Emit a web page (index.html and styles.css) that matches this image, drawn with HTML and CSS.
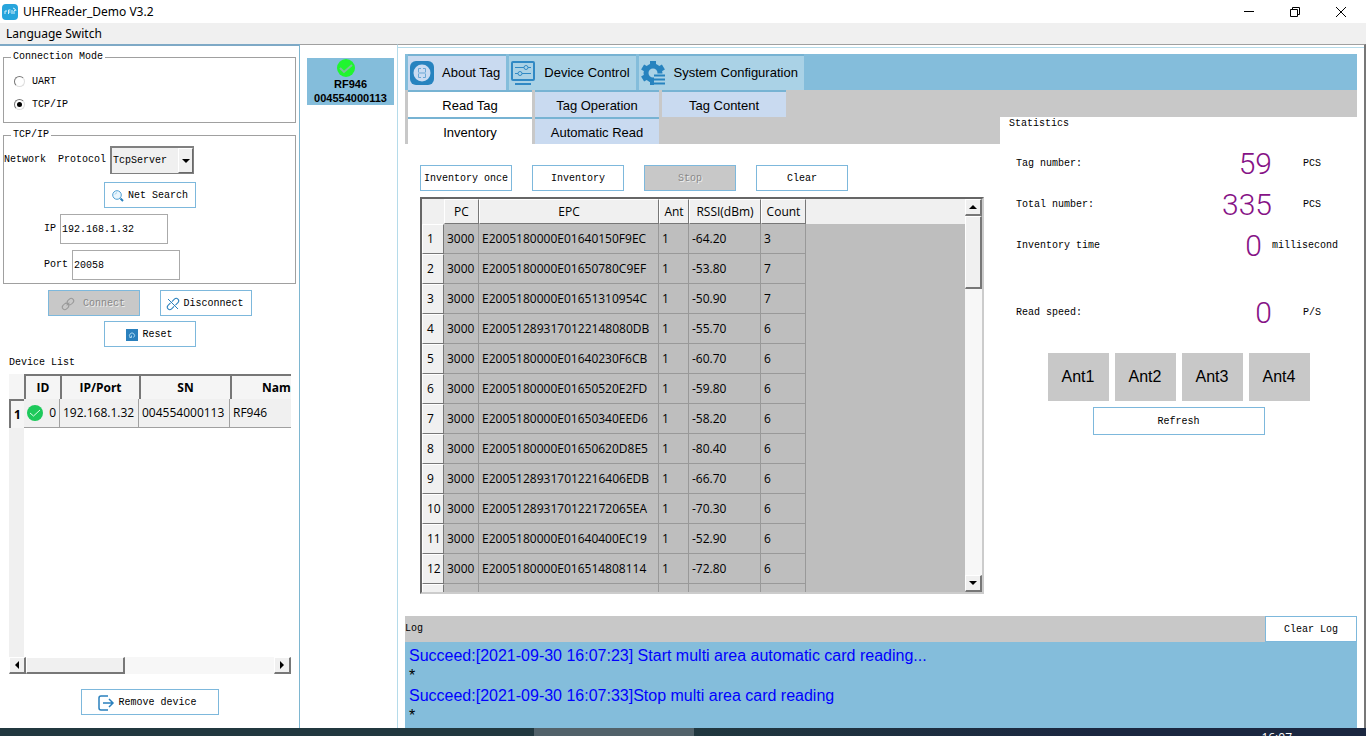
FILE: index.html
```html
<!DOCTYPE html>
<html lang="en">
<head>
  <meta charset="UTF-8">
  <title>UHFReader_Demo V3.2</title>
  <link rel="stylesheet" href="styles.css">
</head>
<body>
  <header class="titlebar">
    <svg class="app-icon" viewBox="0 0 16 16">
      <rect width="16" height="16" rx="4" fill="#27a5dc"/>
      <path d="M3 10V7h2M6.500 10V6h2M6.500 8h2M10 6v4M12 10V7l1-1M11 4l2 1 1 2" fill="none" stroke="#d8f1fb"/>
    </svg>
    <h1>UHFReader_Demo V3.2</h1>
    <div class="window-buttons">
      <button type="button" aria-label="Minimize"><svg viewBox="0 0 12 12"><path d="M1 5.500h10"/></svg></button>
      <button type="button" aria-label="Restore"><svg viewBox="0 0 12 12"><path d="M1.500 3.500h7v7h-7zM3.500 3V1.500h7v7H9"/></svg></button>
      <button type="button" aria-label="Close"><svg viewBox="0 0 12 12"><path d="M1 1l10 10M11 1L1 11"/></svg></button>
    </div>
  </header>
  <nav class="menubar"><a href="#">Language Switch</a></nav>

  <div class="workspace">
    <aside class="sidebar">
      <fieldset class="mode">
        <legend>Connection Mode</legend>
        <label><input type="radio" name="mode">UART</label>
        <label><input type="radio" name="mode" checked>TCP/IP</label>
      </fieldset>

      <fieldset class="network">
        <legend>TCP/IP</legend>
        <div class="protocol">
          <label for="protocol">Network&nbsp; Protocol</label>
          <span class="select">
            <select id="protocol"><option>TcpServer</option></select>
            <span class="select-arrow"><svg viewBox="0 0 8 4"><path d="M0 0h8L4 4z"/></svg></span>
          </span>
        </div>
        <button type="button" class="btn search">
          <svg class="icon" viewBox="0 0 12 12"><circle cx="5" cy="5" r="4.300" fill="#eaf6fd" stroke="#4f9fd3"/><path d="M3 4.500Q3.500 3 5 2.700" fill="none" stroke="#9dd0ee"/><path d="M8.500 8.500l2.500 2.500" stroke="#2a80bd" stroke-width="2"/></svg>
          Net Search
        </button>
        <div class="field"><label for="ip">IP</label><input type="text" id="ip" value="192.168.1.32"></div>
        <div class="field"><label for="port">Port</label><input type="text" id="port" value="20058"></div>
      </fieldset>

      <div class="actions">
        <button type="button" class="btn connect" disabled>
          <svg class="icon" viewBox="0 0 12 12"><g fill="none" stroke="#999" transform="rotate(-45 6 6)"><rect x="-1" y="3.500" width="7" height="5" rx="2.500"/><rect x="6" y="3.500" width="7" height="5" rx="2.500"/><path d="M4 6h4"/></g></svg>
          Connect
        </button>
        <button type="button" class="btn disconnect">
          <svg class="icon" viewBox="0 0 12 12"><g fill="none" stroke="#2a80bd" transform="rotate(-45 6 6)"><path d="M5 3.500H1.500a2.500 2.500 0 0 0 0 5H5M7 3.500h3.500a2.500 2.500 0 0 1 0 5H7"/></g><path d="M1 1l10 10" stroke="#2a80bd"/></svg>
          Disconnect
        </button>
      </div>
      <button type="button" class="btn reset">
        <svg class="icon" viewBox="0 0 12 12"><rect width="12" height="12" fill="#2a80bd"/><path d="M4.500 8.500a2.500 2.500 0 1 1 3 0M3.500 8.500h2v-2" fill="none" stroke="#a9d6f0"/></svg>
        Reset
      </button>

      <h2>Device List</h2>
      <div class="device-list">
        <div class="device-view">
          <table>
            <thead>
              <tr><th class="row-num"></th><th class="id">ID</th><th class="addr">IP/Port</th><th class="sn">SN</th><th class="name">Name</th></tr>
            </thead>
            <tbody>
              <tr>
                <th class="row-num">1</th>
                <td><div class="status"><svg viewBox="0 0 16 16"><circle cx="8" cy="8" r="8" fill="#1dc95b"/><path d="M3 8l3.500 3L13 5" fill="none" stroke="#d9ffe6"/></svg>0</div></td>
                <td>192.168.1.32</td><td>004554000113</td><td>RF946</td>
              </tr>
            </tbody>
          </table>
        </div>
        <div class="scroll-x">
          <button type="button" aria-label="Scroll left"><svg viewBox="0 0 8 8"><path d="M6 0v8L2 4z"/></svg></button>
          <div class="thumb"></div>
          <button type="button" class="end" aria-label="Scroll right"><svg viewBox="0 0 8 8"><path d="M2 0v8l4-4z"/></svg></button>
        </div>
      </div>
      <button type="button" class="btn remove">
        <svg class="icon" viewBox="0 0 16 16"><path d="M10 1H3Q1 1 1 3v10q0 2 2 2h7M5 8h10M11 4l4 4-4 4" fill="none" stroke="#2a80bd" stroke-width="1.500"/></svg>
        Remove device
      </button>
    </aside>

    <section class="devices">
      <div class="device-card">
        <svg viewBox="0 0 18 18"><circle cx="9" cy="9" r="9" fill="#20f52f"/><path d="M3 9l4 4 8-7" fill="none" stroke="#7dbf9b" stroke-width="2"/></svg>
        <span>RF946</span>
        <span>004554000113</span>
      </div>
    </section>

    <main class="main">
      <nav class="tabs main-tabs">
        <button type="button" class="tab active">
          <svg viewBox="0 0 24 24"><rect width="24" height="24" rx="6" fill="#2783bf"/><circle cx="12" cy="12" r="8.500" fill="#cadcf2"/><path d="M11 7.500H8.500V11M13 7.500h2.500V11M11 16.500H8.500V13M13 16.500h2.500V13M8 12h8" fill="none" stroke="#6aa7d5"/></svg>
          About Tag
        </button>
        <button type="button" class="tab">
          <svg viewBox="0 0 24 24"><g fill="none" stroke="#3089c4"><rect x="1" y="1" width="22" height="18" rx="1" stroke-width="2"/><path d="M4 6.500h9M17 6.500h3M4 12.500h3M11 12.500h9"/><circle cx="15" cy="6.500" r="2"/><circle cx="9" cy="12.500" r="2"/><path d="M4 23h16" stroke-width="2"/></g></svg>
          Device Control
        </button>
        <button type="button" class="tab">
          <svg viewBox="0 0 24 24"><g fill="none" stroke="#2783bf"><circle cx="12" cy="12" r="7" stroke-width="5"/><path d="M12 0v5M1.600 6l4.300 2.500M22.400 6l-4.300 2.500M1.600 18l4.300-2.500M12 24v-5" stroke-width="6"/></g><path d="M13 12.500h11V24H13z" fill="#aad2e6"/><path d="M13 14.500h11M13 18.500h11M13 22.500h11" stroke="#2783bf" stroke-width="2"/></svg>
          System Configuration
        </button>
      </nav>
      <nav class="tabs sub-tabs">
        <button type="button" class="tab active">Read Tag</button>
        <button type="button" class="tab">Tag Operation</button>
        <button type="button" class="tab">Tag Content</button>
      </nav>

      <div class="content">
        <section class="inventory">
          <nav class="tabs sub-tabs">
            <button type="button" class="tab active">Inventory</button>
            <button type="button" class="tab">Automatic Read</button>
          </nav>
          <div class="toolbar">
            <button type="button" class="btn">Inventory once</button>
            <button type="button" class="btn">Inventory</button>
            <button type="button" class="btn" disabled>Stop</button>
            <button type="button" class="btn">Clear</button>
          </div>
          <div class="tag-list">
            <div class="tag-view">
              <table>
                <thead>
                  <tr><th class="num"></th><th class="pc">PC</th><th class="epc">EPC</th><th class="ant">Ant</th><th class="rssi">RSSI(dBm)</th><th class="count">Count</th></tr>
                </thead>
                <tbody>
                  <tr><th>1</th><td>3000</td><td>E2005180000E01640150F9EC</td><td>1</td><td>-64.20</td><td>3</td></tr>
                  <tr><th>2</th><td>3000</td><td>E2005180000E01650780C9EF</td><td>1</td><td>-53.80</td><td>7</td></tr>
                  <tr><th>3</th><td>3000</td><td>E2005180000E01651310954C</td><td>1</td><td>-50.90</td><td>7</td></tr>
                  <tr><th>4</th><td>3000</td><td>E200512893170122148080DB</td><td>1</td><td>-55.70</td><td>6</td></tr>
                  <tr><th>5</th><td>3000</td><td>E2005180000E01640230F6CB</td><td>1</td><td>-60.70</td><td>6</td></tr>
                  <tr><th>6</th><td>3000</td><td>E2005180000E01650520E2FD</td><td>1</td><td>-59.80</td><td>6</td></tr>
                  <tr><th>7</th><td>3000</td><td>E2005180000E01650340EED6</td><td>1</td><td>-58.20</td><td>6</td></tr>
                  <tr><th>8</th><td>3000</td><td>E2005180000E01650620D8E5</td><td>1</td><td>-80.40</td><td>6</td></tr>
                  <tr><th>9</th><td>3000</td><td>E20051289317012216406EDB</td><td>1</td><td>-66.70</td><td>6</td></tr>
                  <tr><th>10</th><td>3000</td><td>E200512893170122172065EA</td><td>1</td><td>-70.30</td><td>6</td></tr>
                  <tr><th>11</th><td>3000</td><td>E2005180000E01640400EC19</td><td>1</td><td>-52.90</td><td>6</td></tr>
                  <tr><th>12</th><td>3000</td><td>E2005180000E016514808114</td><td>1</td><td>-72.80</td><td>6</td></tr>
                  <tr><th></th><td></td><td></td><td></td><td></td><td></td></tr>
                </tbody>
              </table>
            </div>
            <div class="scroll-y">
              <button type="button" aria-label="Scroll up"><svg viewBox="0 0 8 8"><path d="M0 6h8L4 2z"/></svg></button>
              <div class="thumb"></div>
              <button type="button" class="end" aria-label="Scroll down"><svg viewBox="0 0 8 8"><path d="M0 2h8L4 6z"/></svg></button>
            </div>
          </div>
        </section>

        <section class="statistics">
          <h2>Statistics</h2>
          <dl>
            <div class="stat"><dt>Tag number:</dt><dd class="lcd">59</dd><dd class="unit">PCS</dd></div>
            <div class="stat"><dt>Total number:</dt><dd class="lcd">335</dd><dd class="unit">PCS</dd></div>
            <div class="stat time"><dt>Inventory time</dt><dd class="lcd">0</dd><dd class="unit">millisecond</dd></div>
            <div class="stat speed"><dt>Read speed:</dt><dd class="lcd">0</dd><dd class="unit">P/S</dd></div>
          </dl>
          <div class="antennas">
            <button type="button">Ant1</button>
            <button type="button">Ant2</button>
            <button type="button">Ant3</button>
            <button type="button">Ant4</button>
          </div>
          <button type="button" class="btn refresh">Refresh</button>
        </section>
      </div>

      <section class="log">
        <div class="log-head"><h2>Log</h2><button type="button" class="btn">Clear Log</button></div>
        <div class="log-body">
          <p class="entry">Succeed:[2021-09-30 16:07:23] Start multi area automatic card reading...</p>
          <p>*</p>
          <p class="entry">Succeed:[2021-09-30 16:07:33]Stop multi area card reading</p>
          <p>*</p>
        </div>
      </section>
    </main>
  </div>

  <footer class="taskbar"><div class="task"></div><time>16:07</time></footer>
</body>
</html>
```
FILE: styles.css
```css
* {
  box-sizing: border-box;
}

body {
  display: flex;
  flex-direction: column;
  height: 100vh;
  margin: 0;
  overflow: hidden;
  background: #fff;
  color: #000;
  font-family: "Liberation Mono", monospace;
  font-size: 10px;
  line-height: 14px;
}

h1,
h2,
p,
dl,
dd {
  margin: 0;
  font-size: inherit;
  font-weight: normal;
}

button,
input,
select {
  font: inherit;
  color: inherit;
}

button {
  padding: 0;
  border: none;
}

svg {
  flex: none;
}

/* window frame */
.titlebar {
  display: flex;
  align-items: center;
  height: 23px;
  padding-left: 2px;
}

.app-icon {
  width: 16px;
  height: 16px;
  margin-right: 5px;
}

.titlebar h1,
.menubar {
  font-family: "Noto Sans", sans-serif;
  font-size: 12px;
}

.window-buttons {
  display: flex;
  margin-left: auto;
}

.window-buttons button {
  width: 46px;
  height: 20px;
  background: none;
  line-height: 0;
}

.window-buttons button:last-child {
  margin-right: 2px;
}

.window-buttons svg {
  width: 12px;
  height: 12px;
  fill: none;
  stroke: #000;
}

.menubar {
  height: 21px;
  padding: 4px 6px;
  background: #f0f0f0;
}

.menubar a {
  color: #000;
  text-decoration: none;
}

.workspace {
  display: flex;
  flex: 1;
  min-height: 0;
}

.btn {
  display: flex;
  align-items: center;
  justify-content: center;
  gap: 4px;
  width: 92px;
  height: 26px;
  padding-top: 2px;
  border: 1px solid #7db8dc;
  background: #fff;
}

.btn:disabled {
  background: #c8c8c8;
  color: #888;
  text-shadow: 1px 1px #eee;
}

.icon {
  width: 12px;
  height: 12px;
  overflow: visible;
}

/* left panel */
.sidebar {
  display: flex;
  flex-direction: column;
  flex: none;
  width: 300px;
  padding: 4px 3px 0;
  border-top: 2px solid #7ea9c6;
  border-right: 1px solid #7eb6d0;
}

fieldset {
  min-width: 0;
  margin: 0 0 5px;
  padding: 6px 0;
  border: 1px solid #a0a0a0;
}

legend {
  margin-left: 7px;
  padding: 0 2px;
}

.mode label {
  display: flex;
  align-items: center;
  gap: 7px;
  height: 23px;
  padding-left: 10px;
}

.mode input {
  appearance: none;
  display: grid;
  place-items: center;
  width: 11px;
  height: 11px;
  margin: 0;
  border: 1px solid;
  border-color: #777 #ddd #ddd #777;
  border-radius: 50%;
}

.mode input:checked::before {
  content: "";
  width: 5px;
  height: 5px;
  border-radius: 50%;
  background: #000;
}

.network {
  margin-bottom: 6px;
  padding: 4px 0 3px;
}

.protocol,
.field {
  display: flex;
  align-items: center;
}

.protocol label {
  margin-right: 4px;
}

.select {
  position: relative;
}

.select select {
  appearance: none;
  display: block;
  width: 84px;
  height: 28px;
  padding: 0 1px;
  border: 1px solid #808080;
  border-width: 2px 1px 1px 2px;
  border-radius: 0;
  background: #f0f0f0;
}

.select-arrow {
  position: absolute;
  top: 2px;
  right: 1px;
  bottom: 1px;
  display: flex;
  align-items: center;
  justify-content: center;
  width: 15px;
  border: 1px solid;
  border-color: #fff #696969 #696969 #fff;
  background: #f0f0f0;
  pointer-events: none;
}

.select-arrow svg {
  width: 8px;
  height: 4px;
}

.search {
  margin: 8px 0 6px 100px;
}

.field {
  gap: 4px;
  padding-left: 40px;
}

.field + .field {
  margin-top: 6px;
}

.field label + input {
  width: 108px;
  height: 30px;
  padding: 1px;
  border: 1px solid #aaa;
}

.actions {
  display: flex;
  justify-content: center;
  gap: 20px;
}

.connect {
  gap: 9px;
}

.reset {
  flex: none;
  align-self: center;
  margin: 5px 0 9px;
}

.sidebar h2 {
  padding-left: 6px;
}

.device-list {
  display: flex;
  flex: 1;
  flex-direction: column;
  min-height: 0;
  margin: 4px 5px 15px 6px;
  overflow: hidden;
}

.device-view {
  flex: 1;
  overflow: hidden;
  background: linear-gradient(to right, #f0f0f0 15px, #fff 15px);
}

table {
  border-collapse: separate;
  border-spacing: 0;
  table-layout: fixed;
  font-family: "Open Sans", sans-serif;
  font-size: 12px;
}

th,
td {
  padding: 0;
  white-space: nowrap;
}

.device-view table {
  width: 319px;
}

.device-view th {
  height: 25px;
  border-top: 2px solid #777;
  border-left: 2px solid #777;
  background: #f5f5f5;
  font-weight: bold;
}

.device-view td {
  height: 29px;
  padding: 0 3px;
  border-right: 1px solid #a0a0a0;
  border-bottom: 1px solid #a0a0a0;
  background: #f0f0f0;
}

.device-view thead .row-num {
  width: 15px;
  border: none;
}

.device-view .id {
  width: 36px;
}

.device-view .addr {
  width: 79px;
}

.device-view .sn {
  width: 91px;
}

.status {
  display: flex;
  align-items: center;
  justify-content: space-between;
}

.status svg {
  width: 16px;
  height: 16px;
}

.scroll-x,
.scroll-y {
  display: flex;
  flex: none;
  background: #f7f7f7;
}

.scroll-x {
  height: 17px;
}

.scroll-x button,
.scroll-y button,
.thumb {
  flex: none;
  border: 1px solid;
  border-color: #fff #777 #777 #fff;
  border-width: 1px 2px 2px 1px;
  background: #f0f0f0;
}

.scroll-x button,
.scroll-y button {
  width: 17px;
  height: 17px;
  line-height: 0;
}

.scroll-x button svg,
.scroll-y button svg {
  width: 8px;
  height: 8px;
}

.scroll-x .thumb {
  width: 35%;
}

.scroll-x .end {
  margin-left: auto;
}

.remove {
  flex: none;
  align-self: center;
  width: 138px;
  margin-bottom: 13px;
  padding-right: 4px;
}

.remove .icon {
  width: 16px;
  height: 16px;
}

/* connected devices */
.devices {
  flex: none;
  width: 97px;
  padding: 13px 3px 0 7px;
  border-top: 1px solid #a0a0a0;
}

.device-card {
  display: flex;
  flex-direction: column;
  align-items: center;
  height: 47px;
  background: #84bddb;
  font: bold 11px/14px "Liberation Sans", sans-serif;
}

.device-card svg {
  width: 18px;
  height: 18px;
  margin: 1px 10px 0 0;
}

/* work area */
.main {
  display: flex;
  flex: 1;
  flex-direction: column;
  min-width: 0;
  padding: 9px 7px 0;
  border-top: 1px solid #a0a0a0;
  border-right: 2px solid #777;
  border-left: 1px solid #b5dbea;
  box-shadow: inset 0 2px #fff, inset 0 3px #b5dbea;
}

.tabs {
  display: flex;
  flex: none;
  gap: 3px;
  padding-left: 3px;
  font-family: "Liberation Sans", sans-serif;
  font-size: 13px;
}

.tab {
  padding-top: 2px;
  border-top: 2px solid #77b3d3;
  background: #c9daf0;
}

.main-tabs {
  height: 36px;
  background: #84bddb;
}

.main-tabs .tab {
  display: flex;
  align-items: center;
  gap: 9px;
  padding: 0 6px 0 2px;
  background: #aad2e6;
}

.main-tabs .active {
  gap: 8px;
  background: #c9daf0;
}

.main-tabs svg {
  width: 24px;
  height: 24px;
}

.sub-tabs {
  height: 27px;
  background: #c8c8c8;
}

.sub-tabs .tab {
  width: 124px;
}

.sub-tabs .active {
  background: #fff;
}

.content {
  display: grid;
  flex: 1;
  grid-template-columns: 5fr 3fr;
  grid-template-rows: minmax(0, 1fr);
  min-height: 0;
  padding-bottom: 22px;
}

.inventory {
  display: flex;
  flex-direction: column;
  min-width: 0;
}

.toolbar {
  display: flex;
  flex: none;
  gap: 20px;
  margin: 21px 15px 6px;
}

.tag-list {
  display: flex;
  flex: 1;
  min-height: 0;
  margin: 0 16px 0 15px;
  border: 2px solid;
  border-color: #666 #ccc #ccc #666;
}

.tag-view {
  flex: 1;
  overflow: hidden;
  background: linear-gradient(#f0f0f0 25px, #bebebe 25px);
}

.tag-view table {
  width: 384px;
}

.tag-view th {
  border: 1px solid;
  border-color: #fff #777 #777 #fff;
  background: #f0f0f0;
  font-weight: normal;
}

.tag-view thead th {
  height: 25px;
}

.tag-view tbody th {
  height: 30px;
  padding-left: 4px;
  text-align: left;
}

.tag-view thead .num {
  width: 22px;
  border-color: #f0f0f0;
}

.tag-view .pc {
  width: 35px;
}

.tag-view .epc {
  width: 180px;
}

.tag-view .ant {
  width: 30px;
}

.tag-view .rssi {
  width: 72px;
}

.tag-view .count {
  width: 45px;
}

.tag-view td {
  height: 30px;
  padding: 0 3px;
  border-right: 1px solid #999;
  border-bottom: 1px solid #999;
  background: #bebebe;
}

.scroll-y {
  flex-direction: column;
  width: 17px;
}

.scroll-y .thumb {
  height: 73px;
}

.scroll-y .end {
  margin-top: auto;
}

.statistics {
  display: flex;
  flex-direction: column;
}

.statistics h2 {
  padding-left: 9px;
}

.stat {
  display: flex;
  align-items: center;
  height: 41px;
  padding-left: 16px;
}

.stat:first-child {
  margin-top: 12px;
}

.stat dt {
  flex: 1;
}

.lcd {
  color: #861286;
  font: 300 30px/34px Roboto, sans-serif;
}

.unit {
  width: 54px;
  margin-left: 31px;
}

.time .unit {
  width: 85px;
  margin-left: 10px;
}

.speed {
  margin-top: 26px;
}

.antennas {
  display: flex;
  justify-content: center;
  gap: 6px;
  margin: 20px 0 6px;
}

.antennas button {
  width: 61px;
  height: 48px;
  background: #c8c8c8;
  font: 16px "Liberation Sans", sans-serif;
}

.refresh {
  align-self: center;
  width: 172px;
  height: 28px;
}

/* log */
.log-head {
  display: flex;
  align-items: center;
  justify-content: space-between;
  background: #c8c8c8;
}

.log-body {
  height: 86px;
  padding: 4px;
  background: #84bddb;
  font: 16px/20px "Liberation Sans", sans-serif;
}

.entry {
  color: #00f;
}

.taskbar {
  display: flex;
  flex: none;
  height: 8px;
  overflow: hidden;
  background: linear-gradient(to right, #21383f 50%, #1b2740 80%);
  color: #fff;
  font: 12px/14px "Open Sans", sans-serif;
}

.task {
  width: 160px;
  margin-left: 534px;
  background: #52626a;
}

.taskbar time {
  margin: 3px 74px 0 auto;
}
```
